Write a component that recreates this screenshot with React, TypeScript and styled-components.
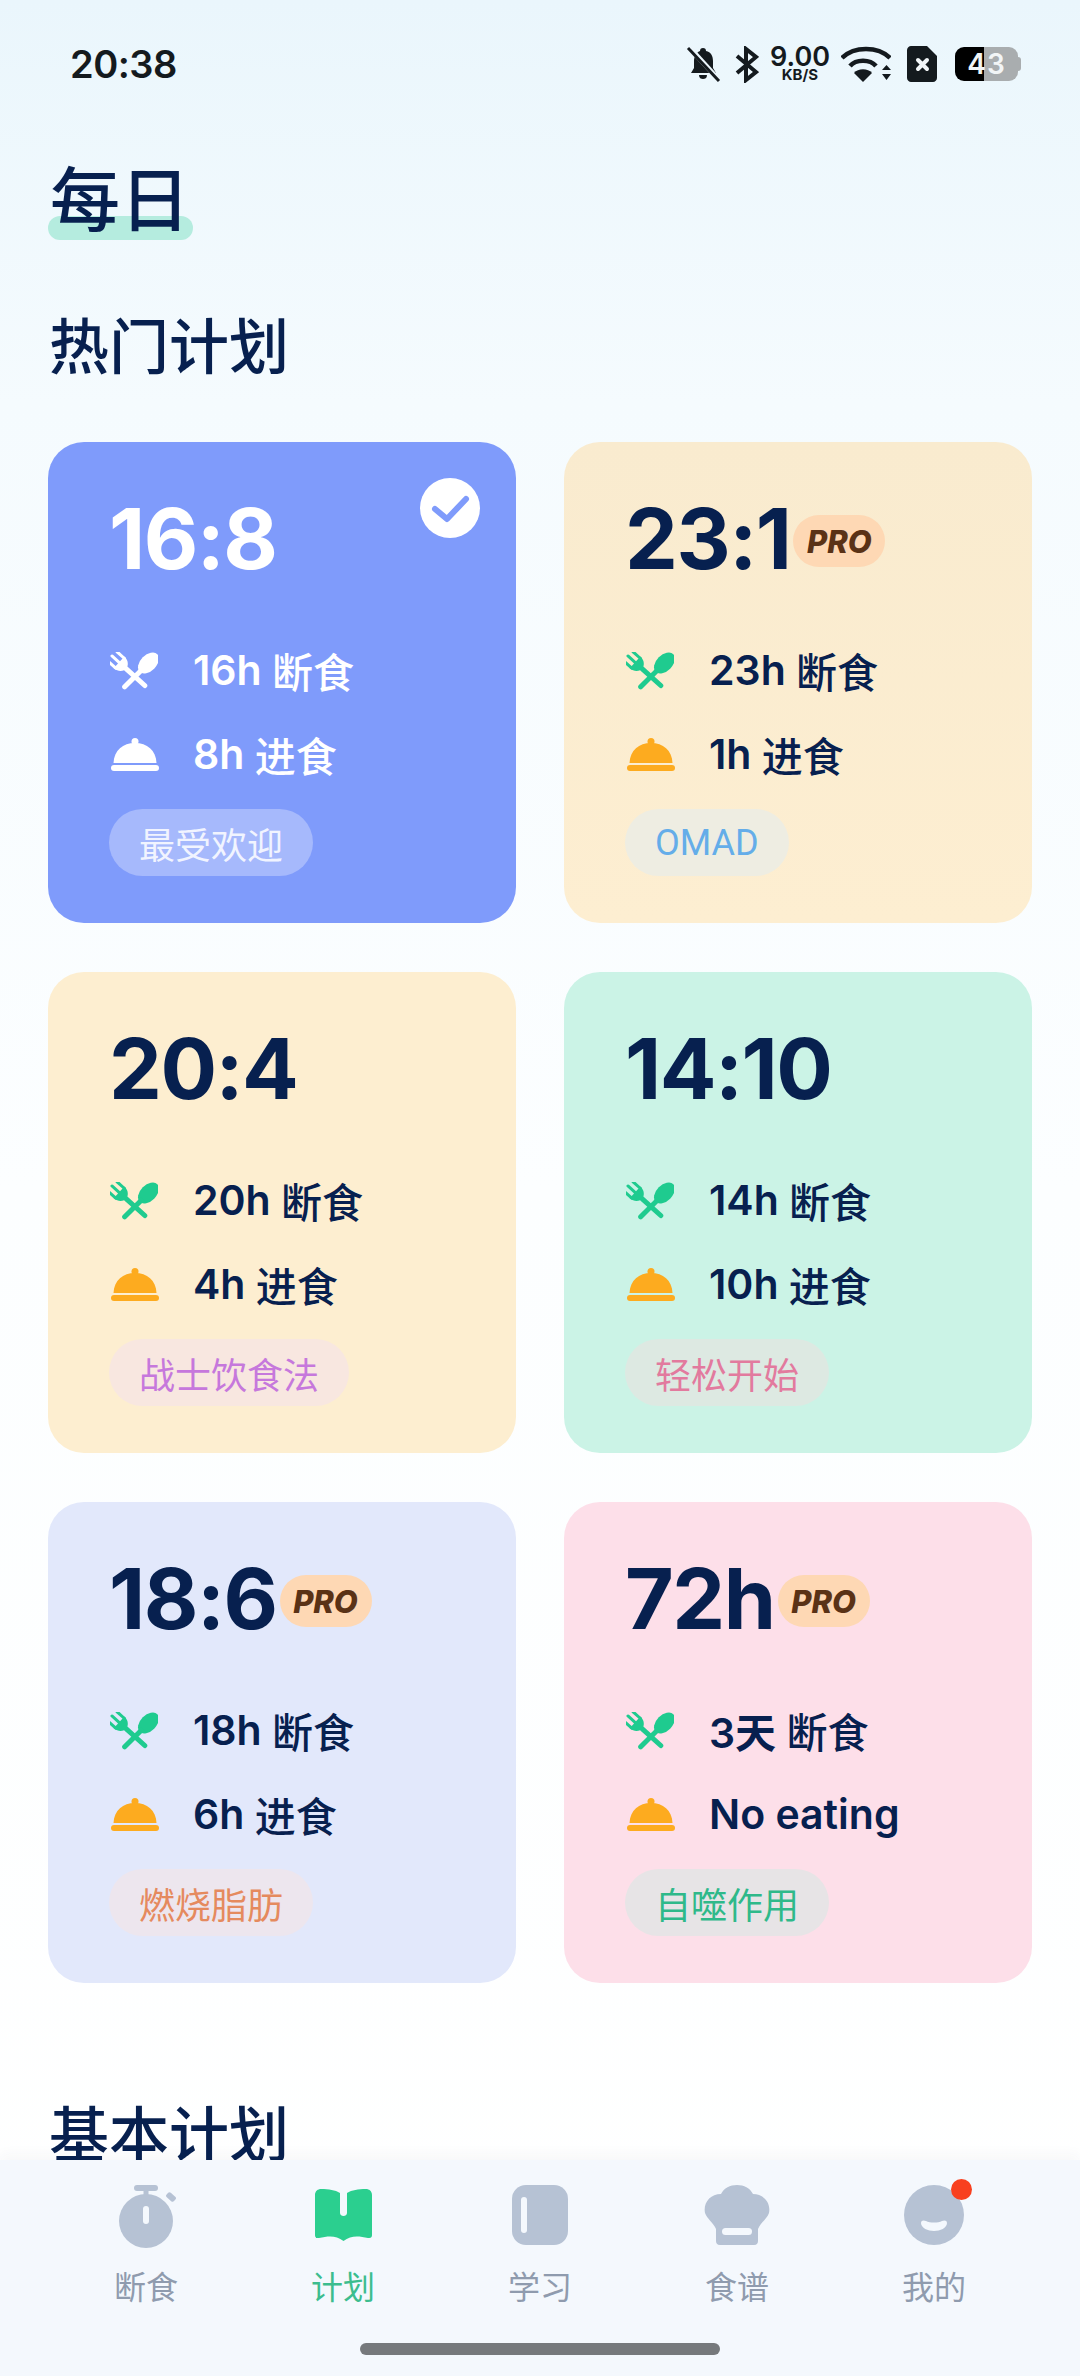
import React from "react";
import styled, { createGlobalStyle } from "styled-components";

const GlobalStyle = createGlobalStyle`
  html, body { margin: 0; padding: 0; }
  body { font-family: Inter, "Noto Sans CJK SC", sans-serif; color: #07204f; }
`;

const Screen = styled.div`
  position: relative;
  width: 1080px;
  height: 2376px;
  overflow: hidden;
  background: linear-gradient(180deg, #eaf6fc 0%, #f5fbfe 17%, #fcfeff 50%, #ffffff 100%);
`;

const StatusBar = styled.div`
  display: flex;
  align-items: center;
  justify-content: space-between;
  height: 36px;
  padding: 46px 59px 0 70px;
`;

const Clock = styled.span`
  font-size: 38px;
  font-weight: 600;
  color: #141a1e;
  letter-spacing: -0.5px;
`;

const StatusIcons = styled.div`
  display: flex;
  align-items: center;
  color: #141a1e;
  svg { display: block; flex: none; }
`;

const Speed = styled.div`
  width: 60px;
  margin: 0 11px;
  font-weight: 600;
  text-align: center;
`;

const SpeedValue = styled.span`
  display: block;
  font-size: 27px;
  line-height: 21px;
`;

const SpeedUnit = styled.span`
  display: block;
  font-size: 15px;
  line-height: 15px;
  font-weight: 700;
`;

const Battery = styled.div`
  position: relative;
  width: 63px;
  height: 34px;
  margin: 0 3px 0 18px;
  border-radius: 9px;
  background: linear-gradient(90deg, #000 0 29px, #a9adaf 29px 100%);
  color: #f2f5f6;
  font-size: 28px;
  font-weight: 600;
  line-height: 34px;
  letter-spacing: 1px;
  text-align: center;
  &::after {
    content: "";
    position: absolute;
    top: 10px;
    right: -3px;
    width: 3px;
    height: 14px;
    border-radius: 0 3px 3px 0;
    background: #a9adaf;
  }
`;

const Content = styled.main`
  padding: 79px 48px 0;
`;

const Title = styled.h1`
  position: relative;
  display: inline-block;
  margin: 0;
  padding: 0 3px 0 2px;
  font-size: 70px;
  line-height: 80px;
  font-weight: 500;
  &::before {
    content: "";
    position: absolute;
    left: 0;
    right: 0;
    bottom: 1px;
    height: 24px;
    border-radius: 12px;
    background: #b5ecdf;
  }
`;

const TitleText = styled.span`
  position: relative;
`;

const SectionTitle = styled.h2<{ $top: number }>`
  margin: ${(p) => p.$top}px 0 0 1px;
  font-size: 60px;
  line-height: 70px;
  font-weight: 500;
`;

const Grid = styled.div`
  display: grid;
  grid-template-columns: repeat(2, 468px);
  grid-auto-rows: 481px;
  gap: 49px 48px;
  margin-top: 60px;
`;

const Card = styled.article<{ $bg: string; $light?: boolean }>`
  position: relative;
  display: flex;
  flex-direction: column;
  align-items: flex-start;
  padding: 52px 0 0 61px;
  border-radius: 36px;
  background: ${(p) => p.$bg};
  color: ${(p) => (p.$light ? "#fff" : "#07204f")};
`;

const Heading = styled.div`
  display: flex;
  align-items: center;
  height: 90px;
`;

const Ratio = styled.span`
  font-size: 84px;
  line-height: 90px;
  font-weight: 700;
  letter-spacing: -1.5px;
`;

const ProBadge = styled.span`
  display: flex;
  align-items: center;
  justify-content: center;
  width: 92px;
  height: 52px;
  margin: 4px 0 0 3px;
  border-radius: 26px;
  background: #fed8b4;
  color: #5a3216;
  font-size: 31px;
  font-weight: 800;
  font-style: italic;
`;

const Row = styled.div<{ $first?: boolean }>`
  display: flex;
  align-items: center;
  height: 84px;
  margin-top: ${(p) => (p.$first ? "44px" : "0")};
  font-size: 41px;
  font-weight: 600;
  white-space: pre;
`;

const RowLabel = styled.span`
  font-size: 41px;
  font-weight: 500;
`;

const RowIcon = styled.span<{ $shift?: number; $drop?: number }>`
  display: flex;
  width: ${(p) => 84 - (p.$shift ?? 0)}px;
  margin-left: ${(p) => p.$shift ?? 0}px;
  padding-top: ${(p) => p.$drop ?? 0}px;
  svg { display: block; }
`;

const Tag = styled.span<{ $bg: string; $fg: string }>`
  display: flex;
  align-items: center;
  height: 67px;
  margin-top: 13px;
  padding: 0 30px;
  border-radius: 34px;
  background: ${(p) => p.$bg};
  color: ${(p) => p.$fg};
  font-family: Roboto, "Noto Sans CJK SC", sans-serif;
  font-size: 36px;
`;

const Check = styled.span`
  position: absolute;
  top: 36px;
  right: 36px;
  display: flex;
`;

const TabBar = styled.nav`
  position: absolute;
  left: 0;
  right: 0;
  bottom: 0;
  height: 216px;
  display: flex;
  justify-content: center;
  padding-top: 25px;
  box-sizing: border-box;
  background: #f4f8fd;
  box-shadow: 0 -6px 12px rgba(60, 70, 90, 0.035);
`;

const Tab = styled.div<{ $active?: boolean }>`
  position: relative;
  display: flex;
  flex-direction: column;
  align-items: center;
  width: 197px;
  color: ${(p) => (p.$active ? "#3cbd8e" : "#8f9bae")};
  font-size: 32px;
  line-height: 40px;
`;

const TabIcon = styled.span`
  display: flex;
  height: 62px;
  margin-bottom: 21px;
`;

const RedDot = styled.span`
  position: absolute;
  top: -6px;
  left: 115px;
  width: 21px;
  height: 21px;
  border-radius: 50%;
  background: #f8401f;
`;

const HomeBar = styled.div`
  position: absolute;
  left: 360px;
  bottom: 21px;
  width: 360px;
  height: 12px;
  border-radius: 6px;
  background: #76797c;
`;

const Cutlery = ({ color }: { color: string }) => (
  <svg width="48" height="40" viewBox="0 0 48 40" fill={color}>
    <g transform="translate(12 13) rotate(-48)">
      <rect x="-8" y="-14" width="3" height="13" rx="1.500" />
      <rect x="-1.500" y="-15" width="3" height="14" rx="1.500" />
      <rect x="5" y="-14" width="3" height="13" rx="1.500" />
      <path d="M-8 -4 L8 -4 C8 1 5 4 2.500 5 L2.500 31 C2.500 34 -2.500 34 -2.500 31 L-2.500 5 C-5 4 -8 1 -8 -4 Z" />
    </g>
    <g transform="translate(38.500 11) rotate(45)">
      <ellipse cx="0" cy="0" rx="8" ry="12.500" />
      <path d="M-2.500 8 L2.500 8 L2.500 34 C2.500 37 -2.500 37 -2.500 34 Z" />
    </g>
  </svg>
);

const Cloche = ({ color }: { color: string }) => (
  <svg width="48" height="33" viewBox="0 0 48 33" fill={color}>
    <circle cx="24" cy="3.500" r="3.500" />
    <path d="M2.500 25 C3 12 12 5 24 5 C36 5 45 12 45.500 25 Z" />
    <rect x="0" y="27" width="48" height="6" rx="3" />
  </svg>
);

const Stopwatch = () => (
  <svg width="60" height="63" viewBox="0 0 60 63" fill="#b6c2d4">
    <rect x="18" y="0" width="24" height="6" rx="3" />
    <rect x="27.500" y="4" width="5" height="8" />
    <rect x="50" y="9" width="10" height="6" rx="2" transform="rotate(42 55 12)" />
    <circle cx="30" cy="36" r="27" />
    <rect x="27" y="21" width="6" height="18" rx="3" fill="#f4f8fd" />
  </svg>
);

const Book = () => (
  <svg width="57" height="56" viewBox="0 -4 57 56" fill="#2bcf8f">
    <path d="M0 6 C0 2 3 0 6 0 C14 0 20 1 25 4 L25 24 C25 28 32 28 32 24 L32 4 C37 1 43 0 51 0 C54 0 57 2 57 6 L57 46 C57 49 55 49 53 49 C44 47 36 46 28.500 52 C21 46 13 47 4 49 C2 49 0 49 0 46 Z" />
  </svg>
);

const Notebook = () => (
  <svg width="56" height="60" viewBox="0 0 56 60" fill="#b6c2d4">
    <rect width="56" height="60" rx="14" />
    <rect x="9" y="12" width="6" height="36" rx="3" fill="#f4f8fd" />
  </svg>
);

const ChefHat = () => (
  <svg width="66" height="60" viewBox="0 0 66 60" fill="#b6c2d4">
    <path d="M12 44 C9 37 3 34 1 28 C-1 18 6 9 17 9 C20 3 26 0 33 0 C40 0 46 3 49 9 C60 9 67 18 65 28 C63 34 57 37 54 44 L54 56 C54 58 53 60 50 60 L16 60 C13 60 12 58 12 56 Z" />
    <rect x="18" y="43" width="30" height="7" rx="3.500" fill="#f4f8fd" />
  </svg>
);

const Smiley = () => (
  <svg width="60" height="60" viewBox="0 0 60 60" fill="#b6c2d4">
    <circle cx="30" cy="30" r="30" />
    <path d="M17 38 C17 35 20 35 22 36 C26 38 34 38 38 36 C40 35 43 35 43 38 C43 43 36 46 30 46 C24 46 17 43 17 38 Z" fill="#f4f8fd" />
  </svg>
);

const plans = [
  { ratio: "16:8", bg: "#7f9bfb", light: true, fast: "16h ", eat: "8h ", eatLabel: "进食", tag: "最受欢迎", tagBg: "#a6b9fc", tagFg: "#f1f4ff", selected: true },
  { ratio: "23:1", bg: "linear-gradient(180deg, #f9ebcf, #fdeed1)", pro: true, fast: "23h ", eat: "1h ", eatLabel: "进食", tag: "OMAD", tagBg: "#eeede2", tagFg: "#64ade9" },
  { ratio: "20:4", bg: "#fdeed0", fast: "20h ", eat: "4h ", eatLabel: "进食", tag: "战士饮食法", tagBg: "#f8e7e0", tagFg: "#c678dc" },
  { ratio: "14:10", bg: "#cbf3e6", fast: "14h ", eat: "10h ", eatLabel: "进食", tag: "轻松开始", tagBg: "#dde9e2", tagFg: "#e27a9e" },
  { ratio: "18:6", bg: "#e2e8fb", pro: true, fast: "18h ", eat: "6h ", eatLabel: "进食", tag: "燃烧脂肪", tagBg: "#ede6ee", tagFg: "#e58a5e" },
  { ratio: "72h", bg: "#fddfe9", pro: true, fast: "3天 ", eat: "No eating", tag: "自噬作用", tagBg: "#e7e4e6", tagFg: "#2fb98a" },
];

const tabs = [
  { label: "断食", icon: <Stopwatch /> },
  { label: "计划", icon: <Book />, active: true },
  { label: "学习", icon: <Notebook /> },
  { label: "食谱", icon: <ChefHat /> },
  { label: "我的", icon: <Smiley />, dot: true },
];

const App: React.FC = () => {
  return (
    <Screen>
      <GlobalStyle />
      <StatusBar>
        <Clock>20:38</Clock>
        <StatusIcons>
          <svg width="35" height="36" viewBox="0 0 35 36" fill="currentColor">
            <path d="M17 2 C19 2 20 3 20 5 C25 6 27 10 27 15 L27 22 L30 27 L5 27 L8 22 L8 15 C8 10 11 6 14 5 C14 3 15 2 17 2 Z" />
            <path d="M13 29 L21 29 C21 32 19 33 17 33 C15 33 13 32 13 29 Z" />
            <path d="M3 1 L34 35" stroke="#ecf6fc" strokeWidth="5" />
            <path d="M2 2 L33 35" stroke="currentColor" strokeWidth="3" />
          </svg>
          <svg width="24" height="37" viewBox="0 0 24 37" fill="none" stroke="currentColor" strokeWidth="4" style={{ marginLeft: 14 }}>
            <path d="M2 10 L21 26 L11 34 L11 3 L21 11 L2 27" />
          </svg>
          <Speed>
            <SpeedValue>9.00</SpeedValue>
            <SpeedUnit>KB/S</SpeedUnit>
          </Speed>
          <svg width="50" height="36" viewBox="0 0 50 36" fill="currentColor">
            <path d="M1 12 C13 0 37 0 49 12" fill="none" stroke="currentColor" strokeWidth="4.500" />
            <path d="M9 20 C15 13 29 13 35 20" fill="none" stroke="currentColor" strokeWidth="4.500" />
            <path d="M22 36 L13 27 C17 22 27 22 31 27 Z" />
            <path d="M41 24 L45.500 19 L50 24 Z M41 28 L50 28 L45.500 34 Z" />
          </svg>
          <svg width="30" height="36" viewBox="0 0 30 36" style={{ marginLeft: 16 }}>
            <path d="M4 0 L20 0 L30 10 L30 32 C30 34 28 36 26 36 L4 36 C2 36 0 34 0 32 L0 4 C0 2 2 0 4 0 Z" fill="currentColor" />
            <path d="M11 14 L20 23 M20 14 L11 23" stroke="#f2f6f8" strokeWidth="4" strokeLinecap="round" />
          </svg>
          <Battery>43</Battery>
        </StatusIcons>
      </StatusBar>
      <Content>
        <Title>
          <TitleText>每日</TitleText>
        </Title>
        <SectionTitle $top={71}>热门计划</SectionTitle>
        <Grid>
          {plans.map((plan) => (
            <Card key={plan.ratio} $bg={plan.bg} $light={plan.light}>
              <Heading>
                <Ratio>{plan.ratio}</Ratio>
                {plan.pro && <ProBadge>PRO</ProBadge>}
              </Heading>
              <Row $first>
                <RowIcon $shift={1} $drop={3}>
                  <Cutlery color={plan.light ? "#fff" : "#1fcb8f"} />
                </RowIcon>
                {plan.fast}
                <RowLabel>断食</RowLabel>
              </Row>
              <Row>
                <RowIcon $shift={2}>
                  <Cloche color={plan.light ? "#fff" : "#fdab1f"} />
                </RowIcon>
                {plan.eat}
                {plan.eatLabel && <RowLabel>{plan.eatLabel}</RowLabel>}
              </Row>
              <Tag $bg={plan.tagBg} $fg={plan.tagFg}>
                {plan.tag}
              </Tag>
              {plan.selected && (
                <Check>
                  <svg width="60" height="60" viewBox="0 0 60 60">
                    <circle cx="30" cy="30" r="30" fill="#fff" />
                    <path d="M15 31 L27 41 L46 21" fill="none" stroke="#7f9bfb" strokeWidth="6" strokeLinecap="round" strokeLinejoin="round" />
                  </svg>
                </Check>
              )}
            </Card>
          ))}
        </Grid>
        <SectionTitle $top={117}>基本计划</SectionTitle>
      </Content>
      <TabBar>
        {tabs.map((tab) => (
          <Tab key={tab.label} $active={tab.active}>
            <TabIcon>{tab.icon}</TabIcon>
            {tab.label}
            {tab.dot && <RedDot />}
          </Tab>
        ))}
        <HomeBar />
      </TabBar>
    </Screen>
  );
};

export default App;
